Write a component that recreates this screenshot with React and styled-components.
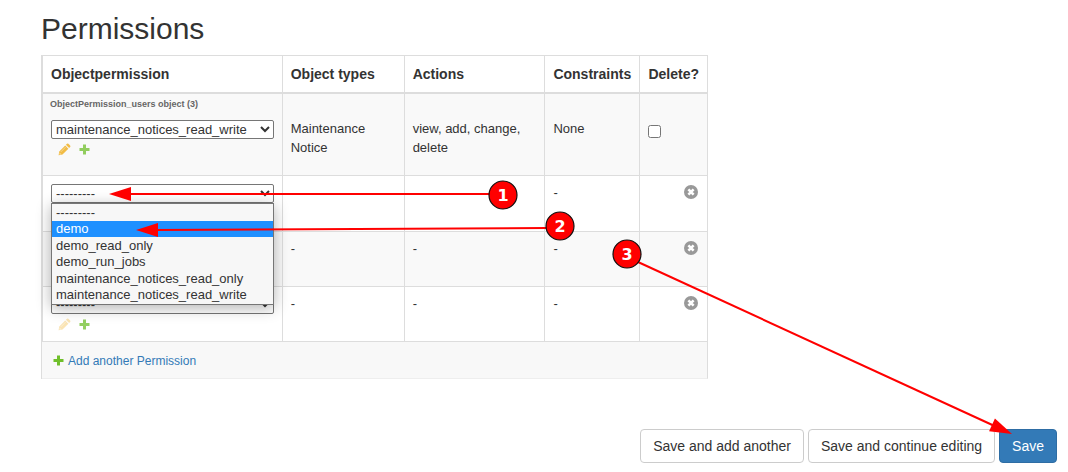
import styled, { createGlobalStyle } from "styled-components";

const GlobalStyle = createGlobalStyle`
  * {
    box-sizing: border-box;
  }
  body {
    margin: 0;
    background: #fff;
    color: #333;
    font-family: "Liberation Sans", Arial, sans-serif;
    font-size: 13px;
    line-height: 19px;
  }
`;

const Page = styled.main`
  position: relative;
  padding: 12px 11px 9px 41px;
`;

const Title = styled.h2`
  margin: 0 0 10px;
  font-size: 30px;
  font-weight: 400;
  line-height: 33px;
`;

const InlineGroup = styled.section`
  max-width: 667px;
  border-left: 1px solid #ddd;
`;

const Table = styled.table`
  width: 100%;
  border-collapse: collapse;
`;

const Col = styled.col`
  width: ${({ $width }) => $width};
`;

const HeadCell = styled.th`
  padding: 8px;
  border: 1px solid #ddd;
  border-bottom-width: 2px;
  font-size: 14px;
  line-height: 20px;
  text-align: left;
  white-space: nowrap;
`;

const Row = styled.tr`
  height: ${({ $open }) => ($open ? "56px" : "55px")};
  background: ${({ $striped }) => ($striped ? "#f9f9f9" : "#fff")};
`;

const Cell = styled.td`
  height: ${({ $saved }) => ($saved ? "82px" : "auto")};
  padding: ${({ $saved }) => ($saved ? "25px 8px 8px" : "7px 8px 8px")};
  border: 1px solid #ddd;
  text-align: ${({ $align }) => $align || "left"};
  vertical-align: top;
`;

const FieldCell = styled(Cell)`
  padding: ${({ $saved }) => ($saved ? "4px 8px 8px" : "8px 8px 8px")};
`;

const ObjectName = styled.p`
  margin: 0 0 10px -1px;
  color: #666;
  font-size: 9px;
  font-weight: 700;
  line-height: 12px;
`;

const SelectWrap = styled.div`
  position: relative;
`;

const Select = styled.select`
  display: block;
  width: 100%;
  height: 19px;
  margin: 0;
  border: 1px solid #767676;
  border-radius: 2px;
  background-color: #fff;
  color: #333;
  font-family: inherit;
  font-size: 13px;
`;

const OptionList = styled.ul`
  position: absolute;
  z-index: 2;
  top: 19px;
  left: 0;
  width: 100%;
  margin: 0;
  padding: 0 0 1px;
  border: 1px solid #767676;
  background: #f7f7f7;
  box-shadow: 0 3px 14px rgba(0, 0, 0, 0.3);
  list-style: none;
`;

const Option = styled.li`
  padding: 0 4px;
  background: ${({ $active }) => ($active ? "#1e90ff" : "transparent")};
  color: ${({ $active }) => ($active ? "#fff" : "#333")};
  line-height: 17px;
  &:nth-child(even) {
    line-height: 16px;
  }
`;

const RelatedLinks = styled.div`
  display: flex;
  gap: 8px;
  padding: 4px 0 0 7px;
`;

const IconLink = styled.a`
  display: flex;
  opacity: ${({ $disabled }) => ($disabled ? 0.3 : 0.75)};
`;

const RemoveButton = styled.button`
  padding: 2px 1px 0;
  border: 0;
  background: none;
`;

const Checkbox = styled.input`
  display: block;
  width: 13px;
  height: 13px;
  margin: 6px 0 0;
`;

const AddRow = styled.div`
  padding: 10px 11px 8px;
  border-right: 1px solid #ddd;
  border-bottom: 1px solid #eee;
  background: #f8f8f8;
`;

const AddLink = styled.a`
  display: flex;
  align-items: center;
  gap: 4px;
  width: fit-content;
  color: #337ab7;
  font-size: 12px;
  line-height: 18px;
  text-decoration: none;
`;

const SubmitRow = styled.div`
  display: flex;
  justify-content: flex-end;
  gap: 4px;
  margin-top: 50px;
`;

const Button = styled.button`
  padding: 6px 12px;
  border: 1px solid ${({ $primary }) => ($primary ? "#2e6da4" : "#ccc")};
  border-radius: 4px;
  background: ${({ $primary }) => ($primary ? "#337ab7" : "#fff")};
  color: ${({ $primary }) => ($primary ? "#fff" : "#333")};
  font-family: inherit;
  font-size: 14px;
  line-height: 20px;
`;

const Annotations = styled.svg`
  position: absolute;
  z-index: 3;
  top: 0;
  left: 0;
  overflow: visible;
  pointer-events: none;
`;

const StepNumber = styled.text`
  fill: #fff;
  font-family: "DejaVu Sans", sans-serif;
  font-size: 16px;
  font-weight: 700;
  text-anchor: middle;
`;

const choices = [
  "---------",
  "demo",
  "demo_read_only",
  "demo_run_jobs",
  "maintenance_notices_read_only",
  "maintenance_notices_read_write",
];

const rows = [
  {
    id: 0,
    saved: true,
    name: "ObjectPermission_users object (3)",
    value: "maintenance_notices_read_write",
    types: "Maintenance Notice",
    actions: "view, add, change, delete",
    constraints: "None",
  },
  { id: 1, open: true, value: "---------", types: "-", actions: "-", constraints: "-" },
  { id: 2, value: "---------", types: "-", actions: "-", constraints: "-" },
  { id: 3, value: "---------", types: "-", actions: "-", constraints: "-" },
];

const steps = [
  { label: "1", x: 503, y: 195, from: [490, 194], to: [109, 194] },
  { label: "2", x: 560, y: 226, from: [547, 228], to: [136, 230] },
  { label: "3", x: 627, y: 254, from: [638, 262], to: [1012, 434] },
];

const PencilIcon = () => (
  <svg width="13" height="13" viewBox="0 0 13 13" aria-hidden="true">
    <path d="M0.6 12.3 1.3 8.4 7.2 2.5 10.4 5.7 4.5 11.6Z" fill="#efa80b" />
    <path d="M7.9 1.8 9 0.7Q9.7 0.2 10.4 0.8L12.1 2.5Q12.7 3.2 12.2 3.9L11.1 5Z" fill="#efa80b" />
    <path d="M2.8 8.9 7.6 4.1" stroke="#fff" strokeOpacity="0.5" strokeWidth="0.8" />
    <path d="M1.7 9.8 3.2 11.3 1.6 11.6Z" fill="#fff" fillOpacity="0.7" />
  </svg>
);

const PlusIcon = () => (
  <svg width="11" height="13" viewBox="0 0 11 13" aria-hidden="true">
    <path d="M4 1.5H7V5H10.5V8H7V11.5H4V8H0.5V5H4Z" fill="#70bf2b" />
  </svg>
);

const RemoveIcon = () => (
  <svg width="14" height="14" viewBox="0 0 14 14" aria-hidden="true">
    <circle cx="7" cy="7" r="7" fill="#999" />
    <path d="M4.4 4.4 9.6 9.6M9.6 4.4 4.4 9.6" stroke="#fff" strokeWidth="2.6" />
  </svg>
);

const PermissionSelect = ({ row }) => (
  <SelectWrap>
    <Select aria-label="Objectpermission" defaultValue={row.value}>
      {choices.map((choice) => (
        <option key={choice}>{choice}</option>
      ))}
    </Select>
    {row.open && (
      <OptionList role="listbox" aria-label="Objectpermission choices">
        {choices.map((choice) => (
          <Option
            key={choice}
            role="option"
            aria-selected={choice === "demo"}
            $active={choice === "demo"}
          >
            {choice}
          </Option>
        ))}
      </OptionList>
    )}
  </SelectWrap>
);

const PermissionRow = ({ row, striped }) => (
  <Row $striped={striped} $open={row.open}>
    <FieldCell $saved={row.saved}>
      {row.name && <ObjectName>{row.name}</ObjectName>}
      <PermissionSelect row={row} />
      <RelatedLinks>
        <IconLink href="#change" aria-label="Change permission" $disabled={!row.saved}>
          <PencilIcon />
        </IconLink>
        <IconLink href="#add" aria-label="Add permission">
          <PlusIcon />
        </IconLink>
      </RelatedLinks>
    </FieldCell>
    <Cell $saved={row.saved}>{!row.open && row.types}</Cell>
    <Cell $saved={row.saved}>{!row.open && row.actions}</Cell>
    <Cell $saved={row.saved}>{row.constraints}</Cell>
    <Cell $saved={row.saved} $align={row.saved ? "left" : "right"}>
      {row.saved ? (
        <Checkbox type="checkbox" aria-label="Delete?" />
      ) : (
        <RemoveButton type="button" aria-label="Remove">
          <RemoveIcon />
        </RemoveButton>
      )}
    </Cell>
  </Row>
);

// arrow head is drawn at the end point and turned along the line
const Step = ({ step }) => {
  const [x1, y1] = step.from;
  const [x2, y2] = step.to;
  const angle = (Math.atan2(y2 - y1, x2 - x1) * 180) / Math.PI;
  const length = Math.hypot(x2 - x1, y2 - y1);
  return (
    <g>
      <g transform={`translate(${x2} ${y2}) rotate(${angle})`}>
        <path d={`M${-length} 0H-18`} stroke="#f00" strokeWidth="2" />
        <path d="M0 0-22-7V7Z" fill="#f00" />
      </g>
      <circle cx={step.x} cy={step.y} r="14" fill="#f00" stroke="#111" strokeWidth="1.2" />
      <StepNumber x={step.x} y={step.y + 6}>
        {step.label}
      </StepNumber>
    </g>
  );
};

const App = () => {
  return (
    <Page>
      <GlobalStyle />
      <Title>Permissions</Title>
      <InlineGroup>
        <Table>
          <colgroup>
            <Col $width="240px" />
            <Col $width="122px" />
            <Col $width="141px" />
            <Col $width="95px" />
            <Col $width="auto" />
          </colgroup>
          <thead>
            <tr>
              <HeadCell>Objectpermission</HeadCell>
              <HeadCell>Object types</HeadCell>
              <HeadCell>Actions</HeadCell>
              <HeadCell>Constraints</HeadCell>
              <HeadCell>Delete?</HeadCell>
            </tr>
          </thead>
          <tbody>
            {rows.map((row, index) => (
              <PermissionRow key={row.id} row={row} striped={index % 2 === 0} />
            ))}
          </tbody>
        </Table>
        <AddRow>
          <AddLink href="#add-another">
            <PlusIcon />
            Add another Permission
          </AddLink>
        </AddRow>
      </InlineGroup>
      <SubmitRow>
        <Button type="submit">Save and add another</Button>
        <Button type="submit">Save and continue editing</Button>
        <Button type="submit" $primary>
          Save
        </Button>
      </SubmitRow>
      <Annotations width="1" height="1">
        {steps.map((step) => (
          <Step key={step.label} step={step} />
        ))}
      </Annotations>
    </Page>
  );
};

export default App;
